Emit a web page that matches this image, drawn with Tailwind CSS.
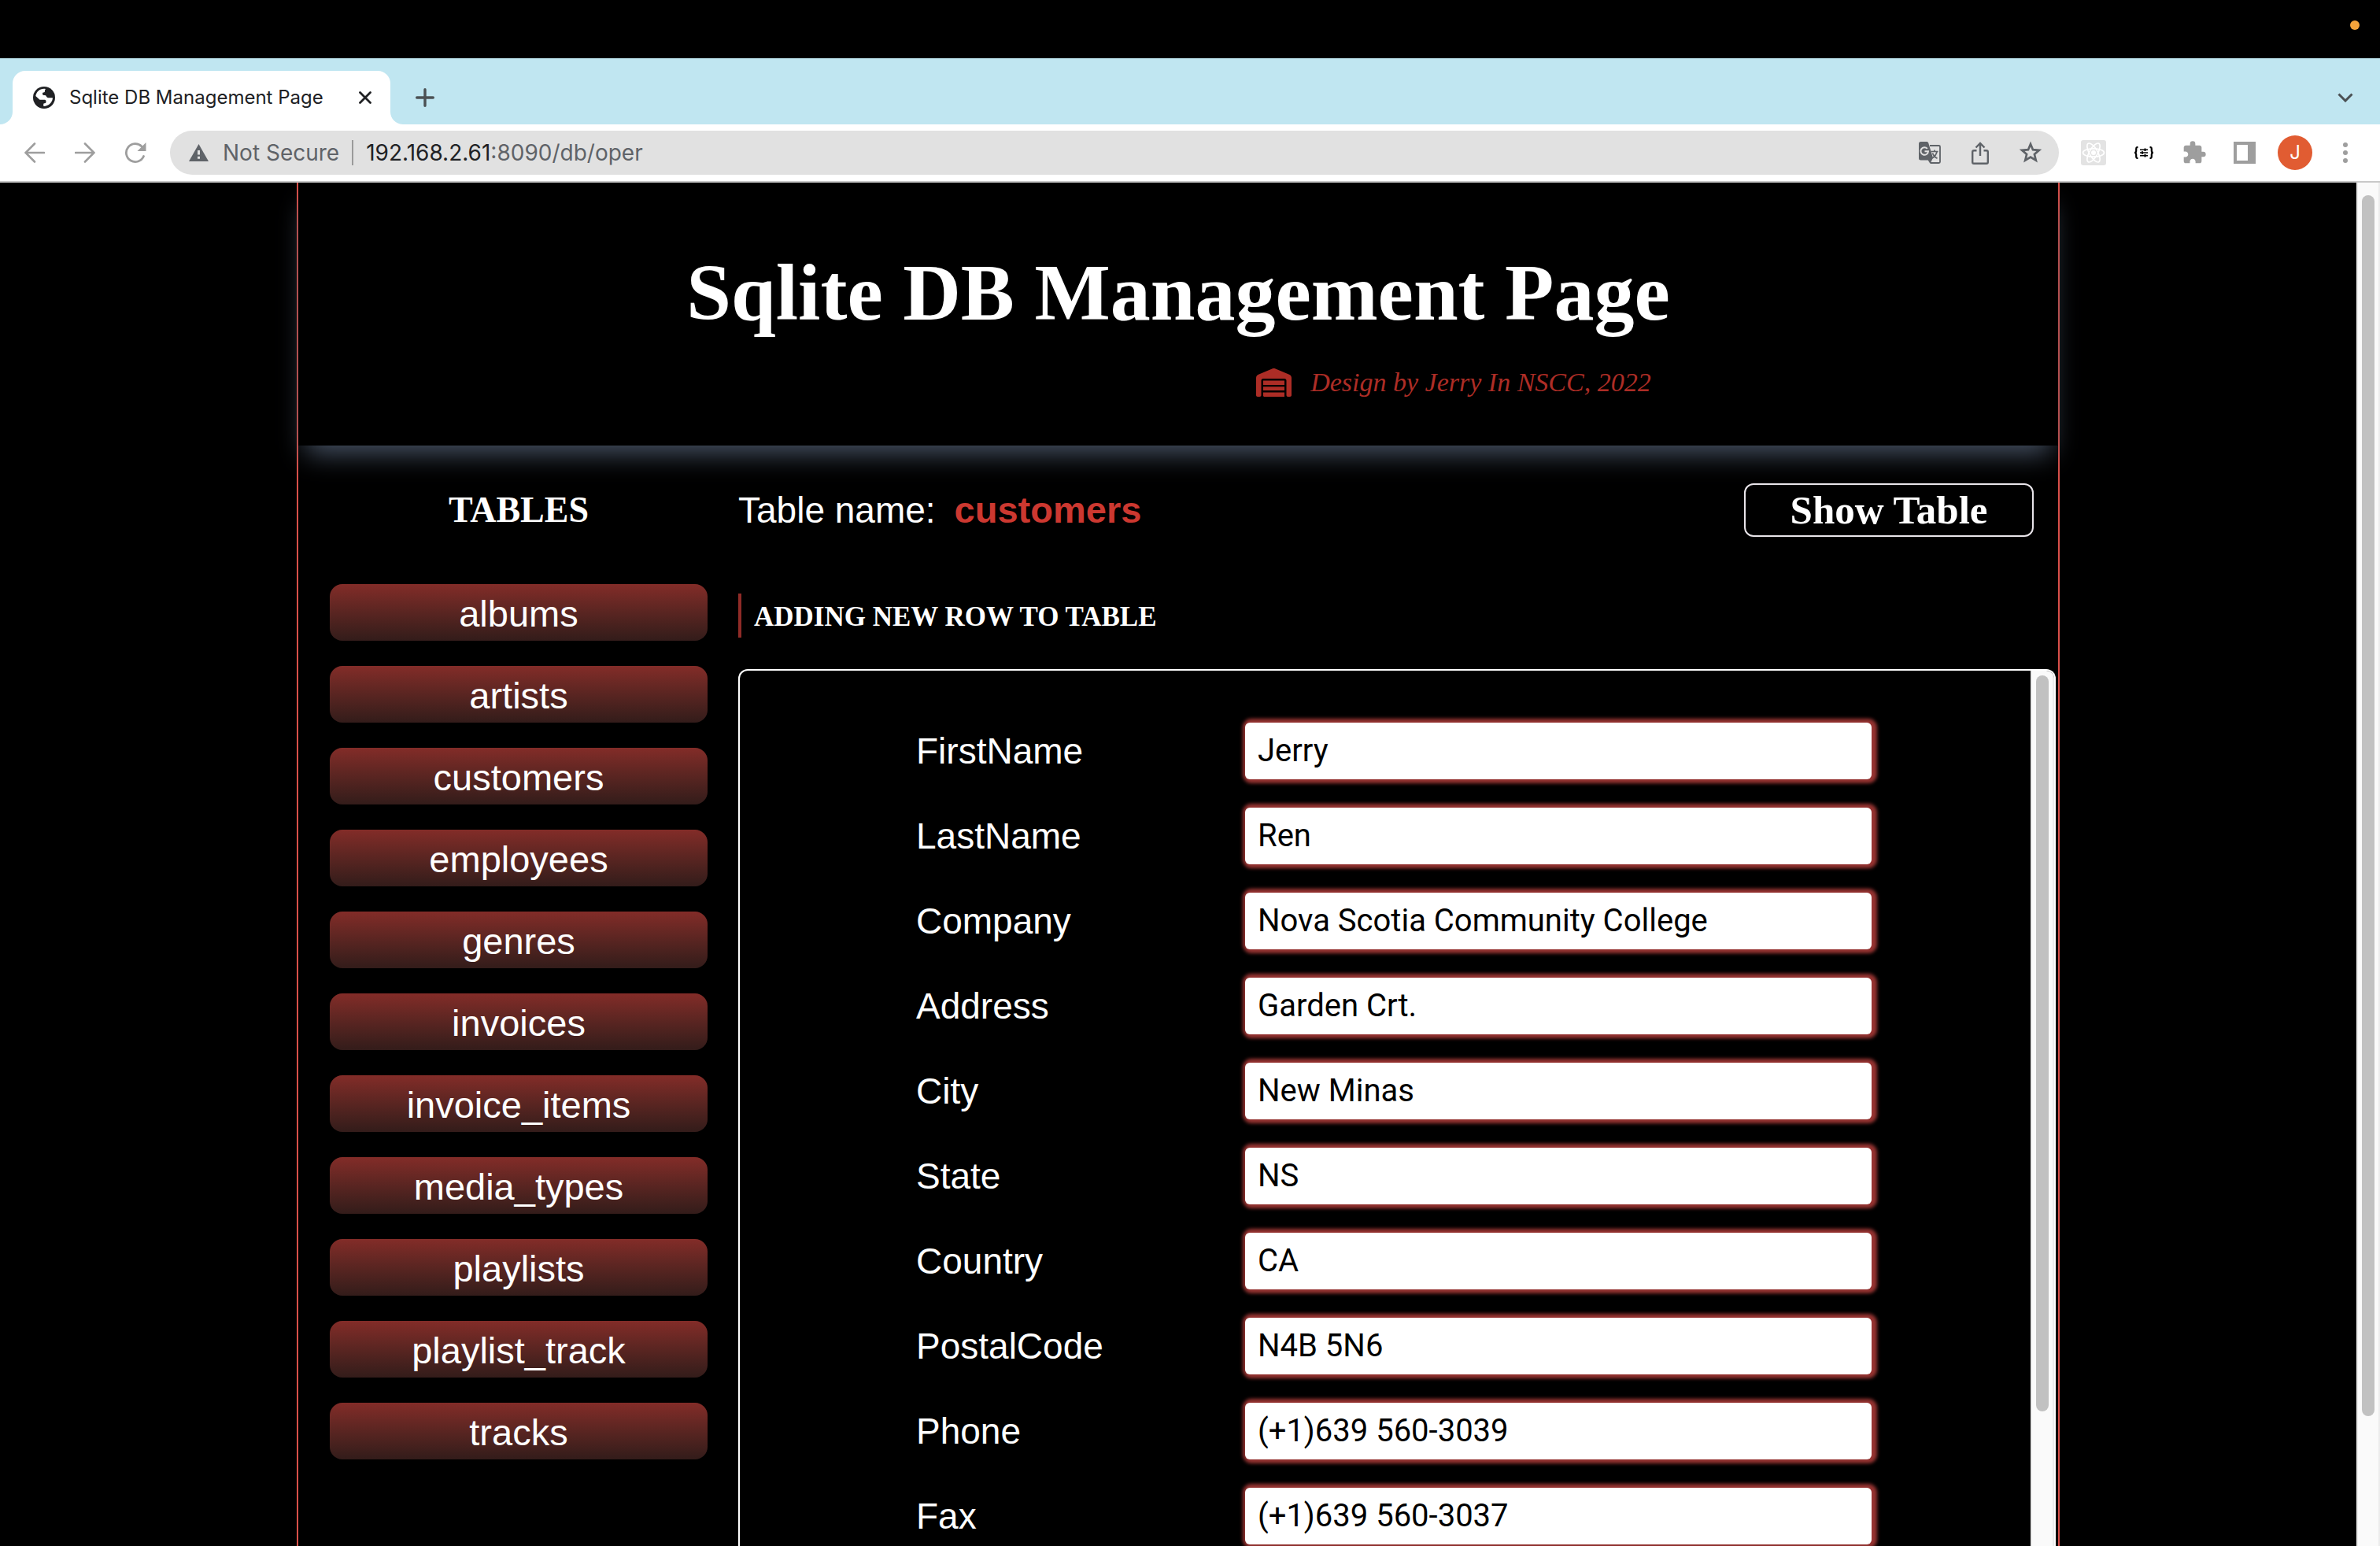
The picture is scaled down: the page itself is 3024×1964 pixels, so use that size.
<!DOCTYPE html>
<html lang="en">
<head>
<meta charset="utf-8">
<title>Sqlite DB Management Page</title>
<script src="https://cdn.jsdelivr.net/npm/@tailwindcss/browser@4"></script>
</head>
<body class="flex h-screen flex-col overflow-hidden bg-black font-['Inter',sans-serif] text-white">

<!-- System menu bar -->
<div class="flex h-[74px] shrink-0 items-start justify-end px-[26px] pt-[26px]">
  <span class="size-3 rounded-full bg-[#f5a43b]"></span>
</div>

<!-- Tab strip -->
<div class="flex h-[84px] shrink-0 items-end bg-[#c0e6f1] text-[#202124]">
  <svg class="size-4 shrink-0 fill-white" viewBox="0 0 16 16"><path d="M16 0v16H0A16 16 0 0 0 16 0z"/></svg>
  <div class="flex h-[68px] w-[480px] shrink-0 items-center rounded-t-[16px] bg-white pl-[26px] pr-4">
    <svg class="size-7 shrink-0" viewBox="0 0 28 28"><circle cx="14" cy="14" r="14" fill="#202124"/><path fill="#fff" d="M16 3.200c-1 .4-1 1.300-1 2.300 0 1.300-.4 2-1.700 2-1 0-1.300.5-1.300 1.700 0 1.500 1.500 1.700 2.600 1.700.9 0 1.700.3 2.100 1.100.6 1.300 1.200 2.200 2.800 2.200h4.700c.8 0 .8.7.6 1.600-1 4.700-4.600 8.300-10.300 9.200-.9.1-1.300-.2-1.300-1.100v-1.500c0-.8.5-1.100 1.500-1.200 1.600-.2 1.800-1 1.800-2.300 0-1.600-.8-2.100-2.300-2.100H9.400c-1 0-1.400-.3-2-1L3.300 12C4 7 8.500 2.700 14 2.800c.9 0 1.500.1 2 .4z"/></svg>
    <span class="ml-[18px] text-[24px] leading-8 whitespace-nowrap">Sqlite DB Management Page</span>
    <button class="ml-auto flex size-8 items-center justify-center" aria-label="Close tab">
      <svg class="size-4" viewBox="0 0 16 16" fill="none" stroke="#202124" stroke-width="2.800" stroke-linecap="round"><path d="M1.500 1.500l13 13M14.500 1.500l-13 13"/></svg>
    </button>
  </div>
  <svg class="size-4 shrink-0 fill-white" viewBox="0 0 16 16"><path d="M0 0v16h16A16 16 0 0 1 0 0z"/></svg>
  <button class="mb-2 ml-0.5 flex size-[52px] items-center justify-center" aria-label="New tab">
    <svg class="size-6" viewBox="0 0 24 24" fill="none" stroke="#4b5154" stroke-width="3.400" stroke-linecap="round"><path d="M12 1.700v20.600M1.700 12h20.600"/></svg>
  </button>
  <button class="mb-2 ml-auto mr-[18px] flex size-[52px] items-center justify-center" aria-label="Search tabs">
    <svg class="h-3 w-5" viewBox="0 0 20 12" fill="none" stroke="#4b5154" stroke-width="3"><path d="M1.500 1.500L10 10l8.500-8.500"/></svg>
  </button>
</div>

<!-- Toolbar -->
<div class="flex h-[74px] shrink-0 items-center border-b-2 border-[#c9c9c9] bg-white px-3 text-[28px] leading-9">
  <button class="flex h-14 w-16 shrink-0 items-center justify-center" aria-label="Back">
    <svg class="size-[26px]" viewBox="0 0 26 26" fill="none" stroke="#9e9e9e" stroke-width="2.600" stroke-linecap="round"><path d="M25 13H2M13 1.500L1.500 13 13 24.500"/></svg>
  </button>
  <button class="flex h-14 w-16 shrink-0 items-center justify-center" aria-label="Forward">
    <svg class="size-[26px]" viewBox="0 0 26 26" fill="none" stroke="#9e9e9e" stroke-width="2.600" stroke-linecap="round"><path d="M1 13h23M13 1.500L24.500 13 13 24.500"/></svg>
  </button>
  <button class="flex h-14 w-16 shrink-0 items-center justify-center" aria-label="Reload">
    <svg class="size-7" viewBox="0 0 28 28"><path d="M24.500 18.500A11.500 11.500 0 1 1 22 5.900" fill="none" stroke="#9e9e9e" stroke-width="2.800" stroke-linecap="round"/><path d="M27.500 1v11h-11z" fill="#9e9e9e"/></svg>
  </button>

  <div class="ml-3 flex h-14 min-w-0 flex-1 items-center rounded-full bg-[#e1e1e1] pl-6 pr-1 text-[#5f6368]">
    <svg class="h-[22px] w-[25px] shrink-0" viewBox="0 0 25 22"><path d="M12.500 0L25 22H0z" fill="#5f6368"/><path d="M11 8h3v5.500h-3zM11 15.700h3v3h-3z" fill="#e1e1e1"/></svg>
    <span class="ml-[18px] whitespace-nowrap">Not Secure</span>
    <span class="mx-4 h-8 w-[2px] shrink-0 bg-[#9a9a9a]"></span>
    <div class="min-w-0 flex-1 whitespace-nowrap outline-none" role="textbox" contenteditable="true" spellcheck="false" aria-label="Address"><span class="text-[#202124]">192.168.2.61</span>:8090/db/oper</div>
    <button class="flex h-14 w-16 shrink-0 items-center justify-center" aria-label="Translate this page">
      <svg class="size-7" viewBox="0 0 28 28"><path d="M14 5h11.500A1.500 1.500 0 0 1 27 6.500v19a1.500 1.500 0 0 1-1.500 1.500H15" fill="none" stroke="#5f6368" stroke-width="1.800"/><path d="M2.500 0H10c1 0 1.800.5 2.200 1.600L18 20.500 14.500 28l-2.800-4.500H2.500A2.500 2.500 0 0 1 0 21V2.500A2.500 2.500 0 0 1 2.500 0z" fill="#5f6368"/><path d="M10.800 8.800A4.800 4.800 0 1 0 12 12.300H7.500" fill="none" stroke="#e1e1e1" stroke-width="2"/><path d="M15.500 12.500h9M20 10.500v2M23 12.500c-.6 3.500-3 6.500-6 8.500M17.500 14.500c1 3 3.500 5.500 6 6.800" fill="none" stroke="#5f6368" stroke-width="1.700"/></svg>
    </button>
    <button class="flex h-14 w-16 shrink-0 items-center justify-center" aria-label="Share this page">
      <svg class="h-[29px] w-[22px]" viewBox="0 0 22 29" fill="none" stroke="#5f6368" stroke-width="2.400"><path d="M6.500 11.200H3A1.800 1.800 0 0 0 1.200 13v13A1.800 1.800 0 0 0 3 27.800h16a1.800 1.800 0 0 0 1.800-1.800V13a1.800 1.800 0 0 0-1.800-1.800h-3.500M11 18V2M5.500 7.500L11 2l5.500 5.500"/></svg>
    </button>
    <button class="flex h-14 w-16 shrink-0 items-center justify-center" aria-label="Bookmark this tab">
      <svg class="size-[30px]" viewBox="0 0 30 30" fill="none" stroke="#5f6368" stroke-width="2.700"><path d="M15 4l3 7.200 7.900.7-6 5.100 1.900 7.700-6.800-4.100-6.800 4.100 1.900-7.700-6-5.100 7.900-.7z"/></svg>
    </button>
  </div>

  <button class="ml-3 flex h-14 w-16 shrink-0 items-center justify-center" aria-label="React Developer Tools">
    <svg class="size-8" viewBox="0 0 32 32"><rect width="32" height="32" rx="3" fill="#e3e3e3"/><g fill="none" stroke="#fff" stroke-width="1.700"><ellipse cx="16" cy="16" rx="13.500" ry="5.200"/><ellipse cx="16" cy="16" rx="13.500" ry="5.200" transform="rotate(60 16 16)"/><ellipse cx="16" cy="16" rx="13.500" ry="5.200" transform="rotate(120 16 16)"/></g><circle cx="16" cy="16" r="3" fill="#fff"/></svg>
  </button>
  <button class="flex h-14 w-16 shrink-0 items-center justify-center" aria-label="JSON formatter">
    <svg class="h-4 w-[26px]" viewBox="0 0 26 16" fill="none" stroke="#000"><path stroke-width="2.200" d="M5.500 1H5C3.600 1 3.200 1.800 3.200 3v2.500C3.200 7 2.600 8 1 8c1.600 0 2.200 1 2.200 2.500V13c0 1.200.4 2 1.800 2h.5M20.500 1h.5c1.400 0 1.800.8 1.800 2v2.500c0 1.500.6 2.500 2.200 2.500-1.600 0-2.200 1-2.200 2.500V13c0 1.200-.4 2-1.800 2h-.5"/><path stroke-width="1.400" d="M8 4.300h10M8 8h10M8 11.700h10"/><path stroke-width="2" d="M14.500 2.500v3.600M11 6.200v3.600M14.500 9.900v3.600"/></svg>
  </button>
  <button class="flex h-14 w-16 shrink-0 items-center justify-center" aria-label="Extensions">
    <svg class="size-8" viewBox="0 0 24 24" fill="#9e9e9e"><path d="M20.500 11H19V7c0-1.100-.9-2-2-2h-4V3.500a2.500 2.500 0 0 0-5 0V5H4c-1.100 0-1.990.9-1.990 2v3.800H3.500c1.490 0 2.700 1.210 2.700 2.700s-1.210 2.700-2.700 2.700H2V20c0 1.100.9 2 2 2h3.800v-1.500c0-1.490 1.210-2.700 2.700-2.700s2.700 1.210 2.700 2.700V22H17c1.100 0 2-.9 2-2v-4h1.500a2.500 2.500 0 0 0 0-5z"/></svg>
  </button>
  <button class="flex h-14 w-16 shrink-0 items-center justify-center" aria-label="Side panel">
    <svg class="size-7" viewBox="0 0 28 28"><path fill="#9e9e9e" fill-rule="evenodd" d="M0 0h28v28H0zM4 4v20h14V4z"/></svg>
  </button>
  <button class="flex h-14 w-16 shrink-0 items-center justify-center" aria-label="Profile">
    <span class="flex size-11 items-center justify-center rounded-full bg-[#e15c32] text-[24px] leading-8 text-white">J</span>
  </button>
  <button class="flex h-14 w-16 shrink-0 items-center justify-center" aria-label="Menu">
    <svg class="h-[26px] w-[6px]" viewBox="0 0 6 26" fill="#9e9e9e"><circle cx="3" cy="3" r="3"/><circle cx="3" cy="13" r="3"/><circle cx="3" cy="23" r="3"/></svg>
  </button>
</div>

<!-- Web page -->
<div class="flex min-h-0 flex-1 overflow-hidden">
  <div class="flex min-w-0 flex-1 overflow-hidden">
    <div class="mx-auto flex w-full max-w-[2240px] flex-col border-x-2 border-[#d9504a]">
      <header class="flex h-[334px] shrink-0 flex-col items-center pt-20 shadow-[0_20px_32px_-10px_#485466]">
        <div>
          <h1 class="font-['Liberation_Serif',serif] text-[102px] leading-[120px] font-bold whitespace-nowrap">Sqlite DB Management Page</h1>
          <div class="mt-8 flex items-center justify-end gap-6 pr-6 text-[#ad2d26]">
            <svg class="h-9 w-[45px]" viewBox="0 0 45 36" fill="currentColor"><path d="M22.500 0c.6 0 1.100.1 1.600.3L42 7.700c1.900.8 3 2.400 3 4.300v22c0 1.200-.8 2-2 2h-2.500c-1.200 0-2-.8-2-2V15.500c0-1.500-1-2.500-2.500-2.500H9c-1.500 0-2.500 1-2.500 2.500V34c0 1.200-.8 2-2 2H2c-1.200 0-2-.8-2-2V12c0-1.900 1.100-3.500 3-4.300L20.900.3c.5-.2 1-.3 1.600-.3z"/><path d="M9 15.500h27V21H9zM9 23.300h27V28H9zM9 30.500h27V36H10.500C9.600 36 9 35.400 9 34.500z"/></svg>
            <span class="font-['Liberation_Serif',serif] text-[34px] leading-[44px] whitespace-nowrap italic">Design by Jerry In NSCC, 2022</span>
          </div>
        </div>
      </header>

      <div class="flex min-h-0 flex-1 pl-10 pr-[3px] pt-12">
        <nav class="w-[480px] shrink-0" aria-labelledby="tables">
          <h2 id="tables" class="text-center font-['Liberation_Serif',serif] text-[46px] leading-[68px] font-bold">TABLES</h2>
          <ul class="mt-[60px] flex flex-col gap-8 font-['Liberation_Sans',sans-serif] text-[47px] leading-[72px]">
            <li><button class="block h-[72px] w-full rounded-[16px] bg-linear-to-b from-[#832c28] to-[#331c1a] pt-[2px]">albums</button></li>
            <li><button class="block h-[72px] w-full rounded-[16px] bg-linear-to-b from-[#832c28] to-[#331c1a] pt-[2px]">artists</button></li>
            <li><button class="block h-[72px] w-full rounded-[16px] bg-linear-to-b from-[#832c28] to-[#331c1a] pt-[2px]">customers</button></li>
            <li><button class="block h-[72px] w-full rounded-[16px] bg-linear-to-b from-[#832c28] to-[#331c1a] pt-[2px]">employees</button></li>
            <li><button class="block h-[72px] w-full rounded-[16px] bg-linear-to-b from-[#832c28] to-[#331c1a] pt-[2px]">genres</button></li>
            <li><button class="block h-[72px] w-full rounded-[16px] bg-linear-to-b from-[#832c28] to-[#331c1a] pt-[2px]">invoices</button></li>
            <li><button class="block h-[72px] w-full rounded-[16px] bg-linear-to-b from-[#832c28] to-[#331c1a] pt-[2px]">invoice_items</button></li>
            <li><button class="block h-[72px] w-full rounded-[16px] bg-linear-to-b from-[#832c28] to-[#331c1a] pt-[2px]">media_types</button></li>
            <li><button class="block h-[72px] w-full rounded-[16px] bg-linear-to-b from-[#832c28] to-[#331c1a] pt-[2px]">playlists</button></li>
            <li><button class="block h-[72px] w-full rounded-[16px] bg-linear-to-b from-[#832c28] to-[#331c1a] pt-[2px]">playlist_track</button></li>
            <li><button class="block h-[72px] w-full rounded-[16px] bg-linear-to-b from-[#832c28] to-[#331c1a] pt-[2px]">tracks</button></li>
          </ul>
        </nav>

        <main class="ml-[39px] flex min-w-0 flex-1 flex-col font-['Liberation_Sans',sans-serif]">
          <div class="flex h-[68px] shrink-0 items-center pr-7">
            <p class="text-[46px] leading-[68px] whitespace-nowrap">Table name:</p>
            <strong class="ml-6 text-[47px] leading-[68px] font-bold text-[#cc3830]">customers</strong>
            <button class="ml-auto h-[68px] w-[368px] rounded-[12px] border-2 border-[#e9e5ea] font-['Liberation_Serif',serif] text-[51px] leading-[64px] font-bold whitespace-nowrap">Show Table</button>
          </div>
          <h3 class="mt-[72px] h-14 shrink-0 border-l-4 border-[#8f2b27] pl-4 font-['Liberation_Serif',serif] text-[35px] leading-[60px] font-bold whitespace-nowrap">ADDING NEW ROW TO TABLE</h3>

          <div class="mt-10 flex min-h-0 flex-1 overflow-hidden rounded-t-[12px] border-2 border-b-0 border-white">
            <form class="flex min-w-0 flex-1 flex-col gap-9 overflow-hidden pl-56 pr-[202px] pt-[66px] text-[46px] leading-[72px]">
              <div class="flex shrink-0"><label for="FirstName" class="w-[418px] shrink-0">FirstName</label><input id="FirstName" value="Jerry" class="h-[72px] min-w-0 flex-1 rounded-[6px] bg-white px-4 font-['Roboto',sans-serif] text-[40px] text-black shadow-[2px_0px_4px_5px_#963331] outline-none"></div>
              <div class="flex shrink-0"><label for="LastName" class="w-[418px] shrink-0">LastName</label><input id="LastName" value="Ren" class="h-[72px] min-w-0 flex-1 rounded-[6px] bg-white px-4 font-['Roboto',sans-serif] text-[40px] text-black shadow-[2px_0px_4px_5px_#963331] outline-none"></div>
              <div class="flex shrink-0"><label for="Company" class="w-[418px] shrink-0">Company</label><input id="Company" value="Nova Scotia Community College" class="h-[72px] min-w-0 flex-1 rounded-[6px] bg-white px-4 font-['Roboto',sans-serif] text-[40px] text-black shadow-[2px_0px_4px_5px_#963331] outline-none"></div>
              <div class="flex shrink-0"><label for="Address" class="w-[418px] shrink-0">Address</label><input id="Address" value="Garden Crt." class="h-[72px] min-w-0 flex-1 rounded-[6px] bg-white px-4 font-['Roboto',sans-serif] text-[40px] text-black shadow-[2px_0px_4px_5px_#963331] outline-none"></div>
              <div class="flex shrink-0"><label for="City" class="w-[418px] shrink-0">City</label><input id="City" value="New Minas" class="h-[72px] min-w-0 flex-1 rounded-[6px] bg-white px-4 font-['Roboto',sans-serif] text-[40px] text-black shadow-[2px_0px_4px_5px_#963331] outline-none"></div>
              <div class="flex shrink-0"><label for="State" class="w-[418px] shrink-0">State</label><input id="State" value="NS" class="h-[72px] min-w-0 flex-1 rounded-[6px] bg-white px-4 font-['Roboto',sans-serif] text-[40px] text-black shadow-[2px_0px_4px_5px_#963331] outline-none"></div>
              <div class="flex shrink-0"><label for="Country" class="w-[418px] shrink-0">Country</label><input id="Country" value="CA" class="h-[72px] min-w-0 flex-1 rounded-[6px] bg-white px-4 font-['Roboto',sans-serif] text-[40px] text-black shadow-[2px_0px_4px_5px_#963331] outline-none"></div>
              <div class="flex shrink-0"><label for="PostalCode" class="w-[418px] shrink-0">PostalCode</label><input id="PostalCode" value="N4B 5N6" class="h-[72px] min-w-0 flex-1 rounded-[6px] bg-white px-4 font-['Roboto',sans-serif] text-[40px] text-black shadow-[2px_0px_4px_5px_#963331] outline-none"></div>
              <div class="flex shrink-0"><label for="Phone" class="w-[418px] shrink-0">Phone</label><input id="Phone" value="(+1)639 560-3039" class="h-[72px] min-w-0 flex-1 rounded-[6px] bg-white px-4 font-['Roboto',sans-serif] text-[40px] text-black shadow-[2px_0px_4px_5px_#963331] outline-none"></div>
              <div class="flex shrink-0"><label for="Fax" class="w-[418px] shrink-0">Fax</label><input id="Fax" value="(+1)639 560-3037" class="h-[72px] min-w-0 flex-1 rounded-[6px] bg-white px-4 font-['Roboto',sans-serif] text-[40px] text-black shadow-[2px_0px_4px_5px_#963331] outline-none"></div>
            </form>
            <!-- Panel scrollbar -->
            <div class="w-[30px] shrink-0 border-x-2 border-[#ececec] bg-[#fafafa] px-[5px] pt-[6px]">
              <div class="h-[84.5%] rounded-full bg-[#c1c1c1]"></div>
            </div>
          </div>
        </main>
      </div>
    </div>
  </div>
  <!-- Page scrollbar -->
  <div class="w-[30px] shrink-0 border-x-2 border-[#ececec] bg-[#fafafa] px-[5px] pt-4">
    <div class="h-[90.4%] rounded-full bg-[#c1c1c1]"></div>
  </div>
</div>
</body>
</html>
